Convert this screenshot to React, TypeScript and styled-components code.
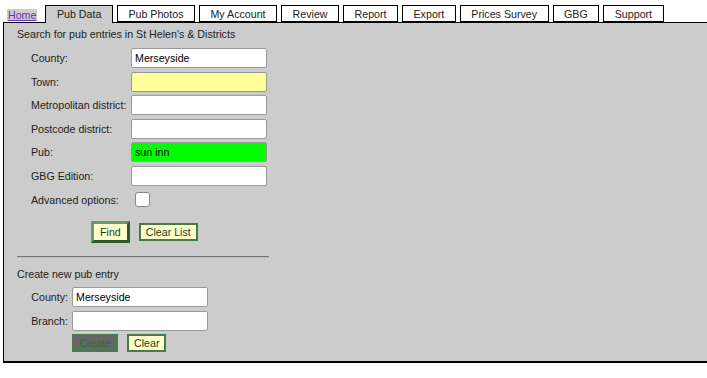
import React from 'react';
import styled, { createGlobalStyle } from 'styled-components';

const GlobalStyle = createGlobalStyle`
  body {
    margin: 0;
    background: #fff;
    font-family: 'Liberation Sans', Arial, sans-serif;
    font-size: 10.667px;
    color: #222;
  }
`;

const Page = styled.div`
  padding: 5px 0 0 3px;
  width: 704px;
`;

const TabBar = styled.div`
  display: flex;
  align-items: flex-end;
  gap: 4px;
  height: 17px;
`;

const HomeLink = styled.a`
  align-self: center;
  margin: 3px 4px 0 4px;
  padding: 0 1px;
  background: #ccc;
  color: #6633bb;
  text-decoration: underline;
  line-height: 12px;
`;

const Tab = styled.div<{ $active?: boolean }>`
  box-sizing: border-box;
  padding: 0 10.5px;
  border: 1px solid #000;
  border-bottom: ${(p) => (p.$active ? 'none' : '1px solid #000')};
  background: ${(p) => (p.$active ? '#ccc' : '#fff')};
  line-height: 16px;
  white-space: nowrap;
  position: relative;
  z-index: ${(p) => (p.$active ? 2 : 0)};
  margin-bottom: ${(p) => (p.$active ? '-1px' : '0')};
  height: ${(p) => (p.$active ? '18px' : '17px')};
`;

const Panel = styled.div`
  border: 1px solid #000;
  border-right: none;
  border-bottom: 2px solid #000;
  background: #ccc;
  height: 341px;
  box-sizing: border-box;
  padding: 5px 0 0 13px;
  position: relative;
  z-index: 1;
`;

const Heading = styled.div`
  line-height: 13px;
`;

const FormGrid = styled.div<{ $label: number }>`
  display: grid;
  grid-template-columns: ${(p) => p.$label}px 136px;
  grid-auto-rows: 20px;
  align-items: center;
  row-gap: ${(p) => (p.$label > 60 ? '3.6px' : '4px')};
  margin-left: 14px;
`;

const Label = styled.label<{ $right?: boolean }>`
  text-align: ${(p) => (p.$right ? 'right' : 'left')};
  padding-right: ${(p) => (p.$right ? '4px' : '0')};
  white-space: nowrap;
`;

const Input = styled.input<{ $bg?: string }>`
  width: 136px;
  height: 20px;
  box-sizing: border-box;
  border: 1px solid #999;
  border-radius: 2px;
  background: ${(p) => p.$bg || '#fff'};
  font-family: 'Liberation Sans', Arial, sans-serif;
  font-size: 10.667px;
  padding: 0 3px;
  margin: 0;
  color: #000;
  outline: none;
`;

const Check = styled.span`
  display: block;
  width: 15px;
  height: 15px;
  box-sizing: border-box;
  margin: 0 0 0 4px;
  border: 1px solid #888;
  border-radius: 3px;
  background: #fff;
`;

const ButtonRow = styled.div<{ $indent: number }>`
  display: flex;
  align-items: center;
  gap: 9px;
  margin-left: ${(p) => p.$indent}px;
`;

const Button = styled.button<{ $raised?: boolean; $dark?: boolean }>`
  font-family: 'Liberation Sans', Arial, sans-serif;
  font-size: 10.667px;
  margin: 0;
  line-height: 14px;
  padding: ${(p) => (p.$raised ? '1px 6px' : '0 5px')};
  background: ${(p) => (p.$dark ? '#666' : '#ffffcc')};
  color: ${(p) => (p.$dark ? '#1e7a1e' : '#1d3d1d')};
  border: ${(p) => (p.$raised ? '3px solid' : '2px solid')};
  border-color: ${(p) => (p.$raised ? '#6a9a6a #2f5a2f #2f5a2f #6a9a6a' : '#4a7a4a')};
  border-radius: 0;
`;

const Divider = styled.hr`
  width: 252px;
  margin: 13px 0 0 0;
  border: none;
  border-top: 1px solid #777;
  border-bottom: 1px solid #bbb;
`;

const searchFields: { label: string; value?: string; bg?: string }[] = [
  { label: 'County:', value: 'Merseyside' },
  { label: 'Town:', bg: '#ffff99' },
  { label: 'Metropolitan district:' },
  { label: 'Postcode district:' },
  { label: 'Pub:', value: 'sun inn', bg: '#00ff00' },
  { label: 'GBG Edition:' },
];

const tabs = ['Pub Data', 'Pub Photos', 'My Account', 'Review', 'Report', 'Export', 'Prices Survey', 'GBG', 'Support'];

export default function App() {
  return (
    <Page>
      <GlobalStyle />
      <TabBar>
        <HomeLink href="#">Home</HomeLink>
        {tabs.map((t, i) => (
          <Tab key={t} $active={i === 0}>
            {t}
          </Tab>
        ))}
      </TabBar>
      <Panel>
        <Heading>Search for pub entries in St Helen's &amp; Districts</Heading>
        <div style={{ height: 7 }} />
        <FormGrid $label={100}>
          {searchFields.map((f) => (
            <React.Fragment key={f.label}>
              <Label>{f.label}</Label>
              <Input defaultValue={f.value} $bg={f.bg} />
            </React.Fragment>
          ))}
          <Label>Advanced options:</Label>
          <div>
            <Check />
          </div>
        </FormGrid>
        <ButtonRow $indent={74} style={{ marginTop: 11 }}>
          <Button $raised>Find</Button>
          <Button>Clear List</Button>
        </ButtonRow>
        <Divider />
        <Heading style={{ marginTop: 10 }}>Create new pub entry</Heading>
        <FormGrid $label={41} style={{ marginTop: 6 }}>
          <Label $right>County:</Label>
          <Input defaultValue="Merseyside" />
          <Label $right>Branch:</Label>
          <Input />
        </FormGrid>
        <ButtonRow $indent={55} style={{ marginTop: 3 }}>
          <Button $dark>Create</Button>
          <Button>Clear</Button>
        </ButtonRow>
      </Panel>
    </Page>
  );
}
